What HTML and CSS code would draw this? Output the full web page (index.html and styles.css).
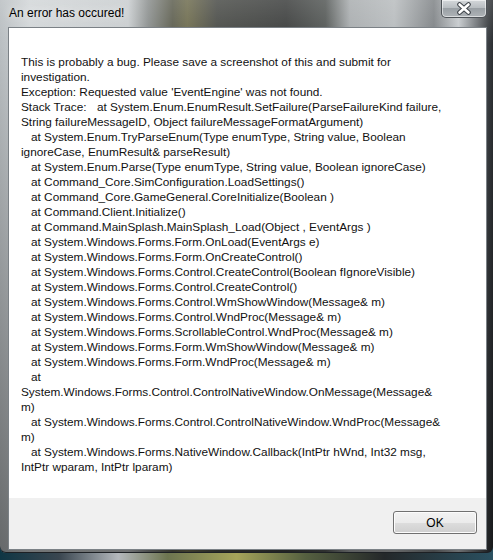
FILE: index.html
```html
<!doctype html>
<html lang="en">
  <head>
    <meta charset="utf-8" />
    <title>An error has occured!</title>
    <link rel="stylesheet" href="styles.css">
  </head>
  <body>
    <div class="window">
      <div class="titlebar">
        <span class="title">An error has occured!</span>
        <button class="close" aria-label="Close">
          <svg width="16" height="13" viewBox="0 0 16 13">
            <path d="M3.5 2.5 L12.5 10.5 M12.5 2.5 L3.5 10.5" stroke="#3d4248" stroke-width="4.6" stroke-linecap="round"/>
            <path d="M3.5 2.5 L12.5 10.5 M12.5 2.5 L3.5 10.5" stroke="#ffffff" stroke-width="2.6" stroke-linecap="round"/>
          </svg>
        </button>
      </div>

      <div class="client">
        <div class="message">
          <div class="line">This is probably a bug. Please save a screenshot of this and submit for</div>
          <div class="line">investigation.</div>
          <div class="line">Exception: Requested value 'EventEngine' was not found.</div>
          <div class="line"><span class="tab">Stack Trace:</span>at System.Enum.EnumResult.SetFailure(ParseFailureKind failure,</div>
          <div class="line">String failureMessageID, Object failureMessageFormatArgument)</div>
          <div class="line ind">at System.Enum.TryParseEnum(Type enumType, String value, Boolean</div>
          <div class="line">ignoreCase, EnumResult&amp; parseResult)</div>
          <div class="line ind">at System.Enum.Parse(Type enumType, String value, Boolean ignoreCase)</div>
          <div class="line ind">at Command_Core.SimConfiguration.LoadSettings()</div>
          <div class="line ind">at Command_Core.GameGeneral.CoreInitialize(Boolean )</div>
          <div class="line ind">at Command.Client.Initialize()</div>
          <div class="line ind">at Command.MainSplash.MainSplash_Load(Object , EventArgs )</div>
          <div class="line ind">at System.Windows.Forms.Form.OnLoad(EventArgs e)</div>
          <div class="line ind">at System.Windows.Forms.Form.OnCreateControl()</div>
          <div class="line ind">at System.Windows.Forms.Control.CreateControl(Boolean fIgnoreVisible)</div>
          <div class="line ind">at System.Windows.Forms.Control.CreateControl()</div>
          <div class="line ind">at System.Windows.Forms.Control.WmShowWindow(Message&amp; m)</div>
          <div class="line ind">at System.Windows.Forms.Control.WndProc(Message&amp; m)</div>
          <div class="line ind">at System.Windows.Forms.ScrollableControl.WndProc(Message&amp; m)</div>
          <div class="line ind">at System.Windows.Forms.Form.WmShowWindow(Message&amp; m)</div>
          <div class="line ind">at System.Windows.Forms.Form.WndProc(Message&amp; m)</div>
          <div class="line ind">at</div>
          <div class="line">System.Windows.Forms.Control.ControlNativeWindow.OnMessage(Message&amp;</div>
          <div class="line">m)</div>
          <div class="line ind">at System.Windows.Forms.Control.ControlNativeWindow.WndProc(Message&amp;</div>
          <div class="line">m)</div>
          <div class="line ind">at System.Windows.Forms.NativeWindow.Callback(IntPtr hWnd, Int32 msg,</div>
          <div class="line">IntPtr wparam, IntPtr lparam)</div>
        </div>

        <div class="footer">
          <button class="btn">OK</button>
        </div>
      </div>
    </div>
  </body>
</html>
```

FILE: styles.css
```css
* {
  box-sizing: border-box;
}

html,
body {
  margin: 0;
  height: 100%;
}

body {
  font-family: "Liberation Sans", Arial, sans-serif;
  font-size: 12px;
  color: #111;
  overflow: hidden;
  /* desktop wallpaper peeking below the window */
  background: linear-gradient(90deg, #0f3644 0%, #3a4650 12%, #b4b8bc 24%, #6d7550 34%, #a5a45a 48%, #556040 62%, #24282a 78%, #2a5060 100%);
}

.window {
  height: 553px;
  display: flex;
  flex-direction: column;
  padding: 0 6px 3px 8px;
  border-radius: 0 0 6px 6px;
  background:
    linear-gradient(180deg, rgba(255, 255, 255, 0.15) 0%, rgba(255, 255, 255, 0) 8%, rgba(0, 0, 0, 0.25) 60%, rgba(0, 0, 0, 0.45) 100%),
    linear-gradient(90deg, #b9bec1 0%, #d2d6d8 6%, #c9cdcf 26%, #8c908f 30%, #5e5f50 35%, #6f6d4f 38%, #4a4c48 44%, #3d3f3e 58%, #545856 66%, #a9adaf 71%, #b8bcbe 80%, #7f8386 88%, #c6cacd 93%, #3b3f43 99%, #2b2e31 100%);
  box-shadow: inset 0 -1px 0 #1d2024;
}

.titlebar {
  height: 27px;
  flex: none;
  display: flex;
  align-items: flex-start;
  justify-content: space-between;
  margin-left: -8px;
  margin-right: -6px;
  padding-left: 9px;
  padding-right: 6px;
}

.title {
  margin-top: 6px;
  font-size: 12px;
  color: #000;
  text-shadow: 0 0 8px rgba(255, 255, 255, 0.9);
}

.close {
  width: 46px;
  height: 18px;
  padding: 0;
  margin: 0;
  display: flex;
  align-items: center;
  justify-content: center;
  border: 1px solid #4e5358;
  border-top: none;
  border-radius: 0 0 5px 5px;
  background: linear-gradient(180deg, #d4d8db 0%, #b9bec2 45%, #9aa0a5 50%, #aeb3b7 100%);
  box-shadow: inset 0 0 0 1px rgba(255, 255, 255, 0.55);
}

.client {
  flex: 1;
  display: flex;
  flex-direction: column;
  background: #fff;
  border: 1px solid #7b8186;
}

.message {
  flex: 1;
  padding: 27px 0 0 12px;
  font-size: 11.8px;
  line-height: 15px;
}

.line {
  white-space: pre;
  height: 15px;
}

.line.ind {
  padding-left: 10px;
}

.tab {
  display: inline-block;
  width: 76px;
}

.footer {
  height: 51px;
  flex: none;
  display: flex;
  justify-content: flex-end;
  align-items: flex-start;
  padding: 13px 9px 0 0;
  background: #f0f0f0;
}

.btn {
  width: 84px;
  height: 23px;
  font-family: inherit;
  font-size: 12px;
  color: #000;
  border: 1px solid #707070;
  border-radius: 3px;
  background: linear-gradient(180deg, #f2f2f2 0%, #ebebeb 50%, #dddddd 51%, #cfcfcf 100%);
  box-shadow: inset 0 0 0 1px #fcfcfc;
}
```
